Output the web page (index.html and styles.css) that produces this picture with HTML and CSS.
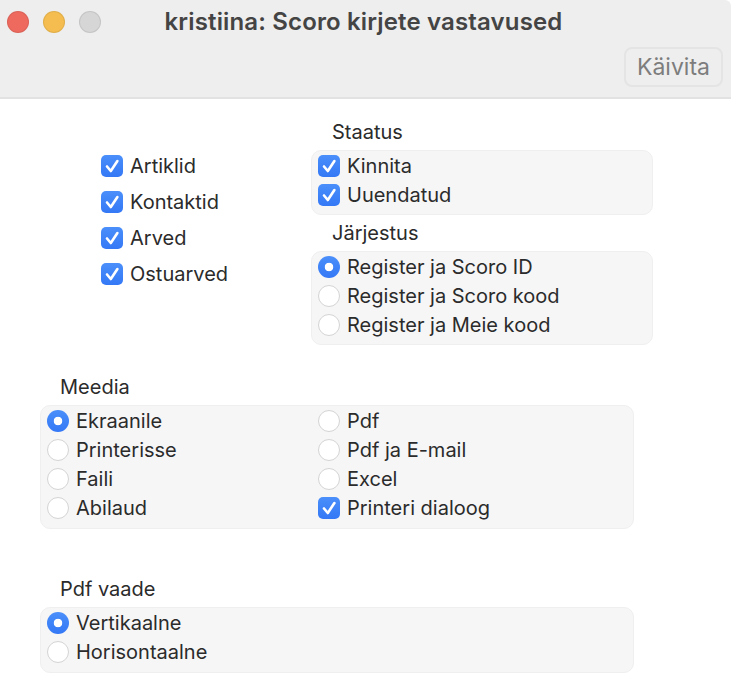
FILE: index.html
```html
<!DOCTYPE html>
<html lang="en">
<head>
  <meta charset="UTF-8" />
  <title>kristiina: Scoro kirjete vastavused</title>
  <link rel="stylesheet" href="styles.css">
</head>
<body>
  <svg class="defs" width="0" height="0">
    <symbol id="check" viewBox="0 0 22 22">
      <path d="M6 11.5 L9.8 16 L16.4 6" fill="none" stroke="#fff" stroke-width="2.6" stroke-linecap="round" stroke-linejoin="round" />
    </symbol>
  </svg>

  <header class="titlebar">
    <div class="lights">
      <span class="light red"></span>
      <span class="light yellow"></span>
      <span class="light grey"></span>
    </div>
    <h1>kristiina: Scoro kirjete vastavused</h1>
    <div class="toolbar">
      <button class="run">Käivita</button>
    </div>
  </header>

  <main class="content">
    <div class="top">
      <div class="plain-checks">
        <div class="row"><span class="box"><svg><use href="#check" /></svg></span>Artiklid</div>
        <div class="row"><span class="box"><svg><use href="#check" /></svg></span>Kontaktid</div>
        <div class="row"><span class="box"><svg><use href="#check" /></svg></span>Arved</div>
        <div class="row"><span class="box"><svg><use href="#check" /></svg></span>Ostuarved</div>
      </div>

      <div class="right">
        <h3>Staatus</h3>
        <div class="group">
          <div class="row"><span class="box"><svg><use href="#check" /></svg></span>Kinnita</div>
          <div class="row"><span class="box"><svg><use href="#check" /></svg></span>Uuendatud</div>
        </div>

        <h3 class="order-title">Järjestus</h3>
        <div class="group">
          <div class="row"><span class="radio on"></span>Register ja Scoro ID</div>
          <div class="row"><span class="radio"></span>Register ja Scoro kood</div>
          <div class="row"><span class="radio"></span>Register ja Meie kood</div>
        </div>
      </div>
    </div>

    <section class="wide media">
      <h3>Meedia</h3>
      <div class="group columns">
        <div>
          <div class="row"><span class="radio on"></span>Ekraanile</div>
          <div class="row"><span class="radio"></span>Printerisse</div>
          <div class="row"><span class="radio"></span>Faili</div>
          <div class="row"><span class="radio"></span>Abilaud</div>
        </div>
        <div>
          <div class="row"><span class="radio"></span>Pdf</div>
          <div class="row"><span class="radio"></span>Pdf ja E-mail</div>
          <div class="row"><span class="radio"></span>Excel</div>
          <div class="row"><span class="box"><svg><use href="#check" /></svg></span>Printeri dialoog</div>
        </div>
      </div>
    </section>

    <section class="wide pdf">
      <h3>Pdf vaade</h3>
      <div class="group">
        <div class="row"><span class="radio on"></span>Vertikaalne</div>
        <div class="row"><span class="radio"></span>Horisontaalne</div>
      </div>
    </section>
  </main>
</body>
</html>
```

FILE: styles.css
```css
* {
  margin: 0;
  padding: 0;
  box-sizing: border-box;
  font-family: Inter, "Liberation Sans", sans-serif;
}

html,
body {
  background: #fff;
}

body {
  width: 731px;
  height: 688px;
  overflow: hidden;
  color: #2b2b2b;
  font-size: 20px;
}

.defs {
  position: absolute;
}

.titlebar {
  height: 99px;
  background: #eeeeee;
  border-bottom: 2px solid #e2e2e2;
  border-top-right-radius: 6px;
  display: flex;
  flex-direction: column;
  position: relative;
}

.lights {
  position: absolute;
  top: 11px;
  left: 7px;
  display: flex;
  gap: 14px;
}

.light {
  width: 22px;
  height: 22px;
  border-radius: 50%;
  border: 1px solid rgba(0, 0, 0, 0.08);
}

.red {
  background: #ee6a5f;
}

.yellow {
  background: #f5bd4f;
}

.grey {
  background: #d6d6d6;
}

.titlebar h1 {
  height: 44px;
  line-height: 43px;
  padding-right: 4px;
  font-size: 24px;
  font-weight: 600;
  letter-spacing: 0.15px;
  color: #444;
  text-align: center;
}

.toolbar {
  display: flex;
  justify-content: flex-end;
  padding: 3px 8px 0 0;
}

.run {
  width: 99px;
  height: 40px;
  background: #eeeeee;
  border: 2px solid #e4e4e4;
  border-radius: 8px;
  color: #7d7d7d;
  font-size: 23px;
}

.top {
  display: flex;
  height: 246px;
}

.plain-checks {
  width: 311px;
  padding: 49px 0 0 101px;
}

.plain-checks .row {
  height: 36px;
}

.right {
  width: 342px;
  padding-top: 21px;
}

h3 {
  font-size: 20px;
  font-weight: 400;
  line-height: 24px;
  height: 30px;
}

.right h3 {
  padding-left: 21px;
}

.right .order-title {
  margin-top: 6px;
}

.group {
  background: #f6f6f6;
  border: 1px solid #efefef;
  border-radius: 10px;
  padding: 0 6px 5px;
}

.wide .group {
  padding-bottom: 6px;
}

.row {
  display: flex;
  align-items: center;
  gap: 7px;
  height: 29px;
  white-space: nowrap;
}

.box {
  width: 22px;
  height: 22px;
  flex: none;
  border-radius: 5px;
  background: linear-gradient(#4a8ffa, #3478f6);
}

.box svg {
  display: block;
  width: 22px;
  height: 22px;
}

.radio {
  width: 22px;
  height: 22px;
  flex: none;
  border-radius: 50%;
  background: #fff;
  border: 1px solid #d4d4d4;
}

.radio.on {
  border: none;
  background: radial-gradient(circle, #fff 4px, transparent 4.6px), linear-gradient(#4a8ffa, #3478f6);
}

.wide {
  width: 594px;
  margin-left: 40px;
}

.wide h3 {
  padding-left: 20px;
}

.media {
  margin-top: 30px;
}

.pdf {
  margin-top: 48px;
}

.columns {
  display: grid;
  grid-template-columns: 271px 1fr;
}
```
